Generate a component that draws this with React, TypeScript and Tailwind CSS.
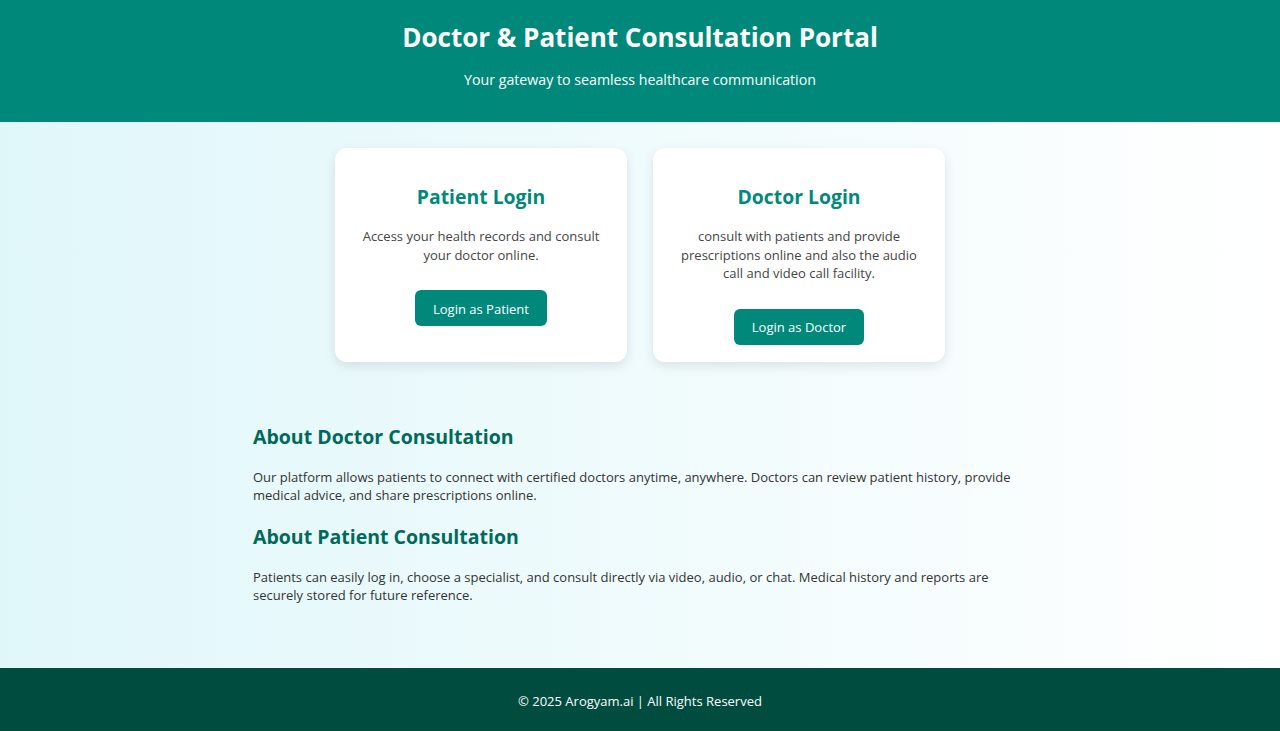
const cards = [
  {
    title: "Patient Login",
    text: "Access your health records and consult your doctor online.",
    button: "Login as Patient",
  },
  {
    title: "Doctor Login",
    text: "consult with patients and provide prescriptions online and also the audio call and video call facility.",
    button: "Login as Doctor",
  },
];

const about = [
  {
    title: "About Doctor Consultation",
    text: "Our platform allows patients to connect with certified doctors anytime, anywhere. Doctors can review patient history, provide medical advice, and share prescriptions online.",
  },
  {
    title: "About Patient Consultation",
    text: "Patients can easily log in, choose a specialist, and consult directly via video, audio, or chat. Medical history and reports are securely stored for future reference.",
  },
];

export default function App() {
  return (
    <div className="min-h-screen flex flex-col font-['Open_Sans',sans-serif]">
      <header className="h-[122px] bg-[#00897b] text-white flex flex-col items-center">
        <h1 className="mt-[19px] text-[26px] leading-[36px] font-bold">Doctor &amp; Patient Consultation Portal</h1>
        <p className="mt-[14px] text-[14.2px] leading-[22px]">Your gateway to seamless healthcare communication</p>
      </header>

      <main className="flex-1 bg-gradient-to-r from-[#e0f7fa] to-white pt-[26px] pb-[60px]">
        <div className="flex justify-center gap-[26px]">
          {cards.map((c) => (
            <div
              key={c.title}
              className="w-[292px] bg-white rounded-xl shadow-[0_4px_12px_rgba(0,0,0,0.1)] px-[23px] pt-[32px] pb-[17px] flex flex-col items-center text-center"
            >
              <h2 className="text-[19.4px] leading-[33px] font-bold text-[#00897b]">{c.title}</h2>
              <p className="mt-[14px] text-[13px] leading-[18.5px] text-[#444]">{c.text}</p>
              <button className="mt-[26px] h-[36px] pt-[3px] px-[18px] rounded-md bg-[#00897b] text-white text-[13px]">
                {c.button}
              </button>
            </div>
          ))}
        </div>

        <section className="w-[774px] mx-auto mt-[61px]">
          {about.map((a, i) => (
            <div key={a.title} className={i > 0 ? "mt-[19px]" : ""}>
              <h3 className="text-[19.5px] leading-[28px] font-bold text-[#00695c]">{a.title}</h3>
              <p className="mt-[17px] text-[13px] leading-[18px] text-[#333]">{a.text}</p>
            </div>
          ))}
        </section>
      </main>

      <footer className="h-[63px] pt-[4px] bg-[#004d40] text-white flex items-center justify-center">
        <p className="text-[13px]">© 2025 Arogyam.ai | All Rights Reserved</p>
      </footer>
    </div>
  );
}
